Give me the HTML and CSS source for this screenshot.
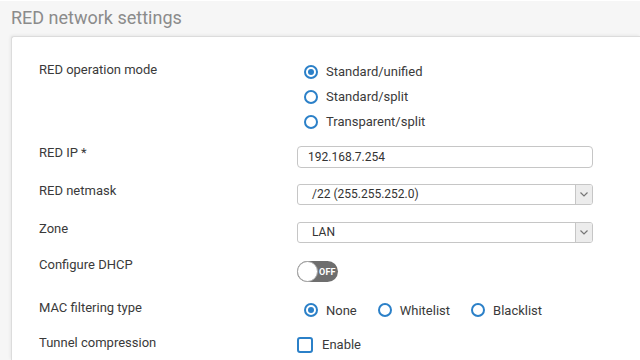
FILE: index.html
```html
<!DOCTYPE html>
<html>
<head>
<meta charset="utf-8">
<link rel="stylesheet" href="styles.css">
</head>
<body>
<div class="page">
  <h1 class="title">RED network settings</h1>
  <div class="panel">
    <div class="form">
      <div class="label label-tall">RED operation mode</div>
      <div class="radio-list">
        <div class="radio-item"><span class="radio checked"></span><span>Standard/unified</span></div>
        <div class="radio-item"><span class="radio"></span><span>Standard/split</span></div>
        <div class="radio-item"><span class="radio"></span><span>Transparent/split</span></div>
      </div>

      <div class="label">RED IP *</div>
      <div class="input">192.168.7.254</div>

      <div class="label">RED netmask</div>
      <div class="select"><span class="select-value">/22 (255.255.252.0)</span><span class="select-arrow"><svg width="8" height="5" viewBox="0 0 8 5"><path d="M0.5 0.5 L4 4 L7.5 0.5" fill="none" stroke="#777" stroke-width="1.2"/></svg></span></div>

      <div class="label">Zone</div>
      <div class="select"><span class="select-value">LAN</span><span class="select-arrow"><svg width="8" height="5" viewBox="0 0 8 5"><path d="M0.5 0.5 L4 4 L7.5 0.5" fill="none" stroke="#777" stroke-width="1.2"/></svg></span></div>

      <div class="label">Configure DHCP</div>
      <div class="toggle"><span class="knob"></span><span class="toggle-text">OFF</span></div>

      <div class="label label-mid">MAC filtering type</div>
      <div class="radio-inline">
        <div class="radio-item"><span class="radio checked"></span><span>None</span></div>
        <div class="radio-item"><span class="radio"></span><span>Whitelist</span></div>
        <div class="radio-item"><span class="radio"></span><span>Blacklist</span></div>
      </div>

      <div class="label label-mid">Tunnel compression</div>
      <div class="check-row"><span class="checkbox"></span><span>Enable</span></div>
    </div>
  </div>
</div>
</body>
</html>
```
FILE: styles.css
```css
html, body {
  margin: 0;
  padding: 0;
  background: #f6f6f6;
  overflow: hidden;
  width: 640px;
  height: 360px;
}
body {
  font-family: Roboto, "Liberation Sans", sans-serif;
  font-size: 13px;
  color: #3a3a3a;
}
.page {
  border-top: 1px solid #ffffff;
  padding-left: 11px;
}
.title {
  margin: 0;
  padding-top: 5px;
  font-size: 18px;
  line-height: 24px;
  font-weight: 400;
  color: #8b8b8b;
}
.panel {
  margin-top: 6px;
  width: 629px;
  height: 324px;
  background: #ffffff;
  border: 1px solid #dcdcdc;
  border-right: none;
  border-bottom: none;
  border-radius: 3px 0 0 0;
  box-shadow: -1px -1px 3px rgba(0,0,0,0.06);
  padding: 22px 0 0 27px;
  box-sizing: border-box;
}
.form {
  display: grid;
  grid-template-columns: 258px 296px;
  grid-template-rows: 87px 38px 38px 36px 42px 35px auto;
  align-items: start;
}
.label {
  line-height: 14px;
  color: #3a3a3a;
}
.label-tall {
  line-height: 22px;
}
.label-mid {
  line-height: 16px;
}
.radio-list {
  display: flex;
  flex-direction: column;
}
.radio-item {
  display: flex;
  align-items: center;
  height: 25px;
  color: #3a3a3a;
}
.radio {
  width: 14px;
  height: 14px;
  box-sizing: border-box;
  border: 2px solid #2b80c8;
  border-radius: 50%;
  margin-left: 7px;
  margin-right: 8px;
  display: flex;
  align-items: center;
  justify-content: center;
}
.radio.checked::after {
  content: "";
  width: 6px;
  height: 6px;
  border-radius: 50%;
  background: #2b80c8;
}
.input {
  height: 22px;
  box-sizing: border-box;
  border: 1px solid #c6c6c6;
  border-radius: 4px;
  padding-left: 10px;
  line-height: 20px;
  font-size: 12px;
  color: #333;
}
.select {
  height: 21px;
  box-sizing: border-box;
  border: 1px solid #c6c6c6;
  border-radius: 3px;
  display: flex;
  font-size: 12px;
  color: #333;
  overflow: hidden;
}
.select-value {
  flex: 1;
  padding-left: 14px;
  line-height: 19px;
}
.select-arrow {
  width: 16px;
  background: #ececec;
  border-left: 1px solid #c6c6c6;
  display: flex;
  align-items: center;
  justify-content: center;
}
.toggle {
  margin-top: 3px;
  width: 41px;
  height: 21px;
  border-radius: 11px;
  background: #6e6e6e;
  display: flex;
  align-items: center;
}
.knob {
  width: 21px;
  height: 21px;
  box-sizing: border-box;
  border-radius: 50%;
  background: #ffffff;
  border: 1px solid #a8a8a8;
}
.toggle-text {
  font-size: 9px;
  font-weight: 700;
  color: #ffffff;
  margin-left: 1px;
  letter-spacing: 0.2px;
}
.radio-inline {
  display: flex;
  height: 20px;
  align-items: center;
}
.radio-inline .radio-item {
  height: 20px;
  margin-right: 7px;
}
.radio-inline .radio-item + .radio-item .radio {
  margin-left: 14px;
}
.check-row {
  display: flex;
  align-items: center;
  height: 17px;
  margin-top: 1px;
}
.checkbox {
  width: 16px;
  height: 16px;
  box-sizing: border-box;
  border: 2px solid #2b80c8;
  border-radius: 3px;
  margin-right: 9px;
}
```
